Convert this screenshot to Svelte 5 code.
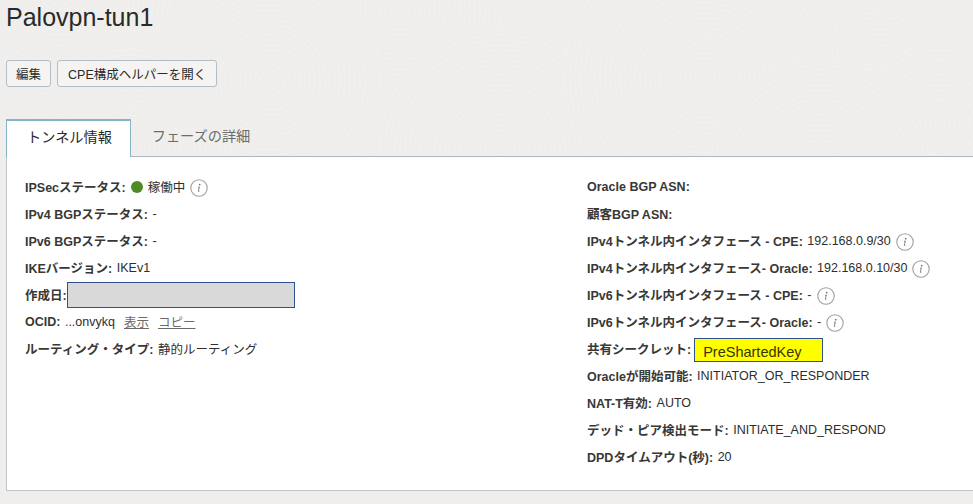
<script>
  const left = [
    { label: 'IPSecステータス:', value: '稼働中', dot: true, info: true },
    { label: 'IPv4 BGPステータス:', value: '-' },
    { label: 'IPv6 BGPステータス:', value: '-' },
    { label: 'IKEバージョン:', value: 'IKEv1' },
    { label: '作成日:', masked: true },
    { label: 'OCID:', value: '...onvykq', links: ['表示', 'コピー'] },
    { label: 'ルーティング・タイプ:', value: '静的ルーティング' }
  ];
  const right = [
    { label: 'Oracle BGP ASN:' },
    { label: '顧客BGP ASN:' },
    { label: 'IPv4トンネル内インタフェース - CPE:', value: '192.168.0.9/30', info: true },
    { label: 'IPv4トンネル内インタフェース- Oracle:', value: '192.168.0.10/30', info: true },
    { label: 'IPv6トンネル内インタフェース - CPE:', value: '-', info: true },
    { label: 'IPv6トンネル内インタフェース- Oracle:', value: '-', info: true },
    { label: '共有シークレット:', secret: 'PreShartedKey' },
    { label: 'Oracleが開始可能:', value: 'INITIATOR_OR_RESPONDER' },
    { label: 'NAT-T有効:', value: 'AUTO' },
    { label: 'デッド・ピア検出モード:', value: 'INITIATE_AND_RESPOND' },
    { label: 'DPDタイムアウト(秒):', value: '20' }
  ];
  const swirls = [
    [60, -10, 110], [400, 10, 150], [620, -30, 130], [880, -30, 120],
    [270, 80, 110], [500, 150, 120], [130, 150, 100],
    [705, 78, 140], [940, 125, 80], [820, 170, 110]
  ];
</script>

{#snippet row(r)}
  <div class="row">
    <span class="label">{r.label}</span>
    {#if r.masked}<span class="masked"></span>{/if}
    {#if r.secret}<span class="secret">{r.secret}</span>{/if}
    {#if r.dot}<span class="dot"></span>{/if}
    {#if r.value}<span class="value">{r.value}</span>{/if}
    {#if r.links}{#each r.links as l}<a class="link" href="#top">{l}</a>{/each}{/if}
    {#if r.info}
      <svg class="info" viewBox="0 0 18 18" width="18" height="18" aria-hidden="true">
        <circle cx="9" cy="9" r="8.2" fill="#fff" stroke="#9e9e9e" stroke-width="1.1" />
        <circle cx="9.7" cy="5.7" r="0.85" fill="#777" />
        <path d="M8 8.3 L9.4 8 L8.3 12.2 Q8.2 13 9.3 12.4" fill="none" stroke="#777" stroke-width="0.9" />
      </svg>
    {/if}
  </div>
{/snippet}

<div class="page">
  <svg class="texture" width="973" height="504" aria-hidden="true">
    {#each swirls as [x, y, n]}
      <circle cx={x} cy={y} r={n} fill="#efeeec" />
      {#each Array(Math.floor(n / 5)) as _, i}
        <circle cx={x} cy={y} r={(i + 1) * 5} fill="none" stroke="#f1f0ee" stroke-width="1.5" />
      {/each}
    {/each}
  </svg>
  <div class="content">
    <h1>Palovpn-tun1</h1>
    <div class="actions">
      <button>編集</button>
      <button>CPE構成ヘルパーを開く</button>
    </div>
    <div class="tabs">
      <div class="tab active">トンネル情報</div>
      <div class="tab">フェーズの詳細</div>
    </div>
    <div class="panel">
      <div class="col left">
        {#each left as r}{@render row(r)}{/each}
      </div>
      <div class="col right">
        {#each right as r}{@render row(r)}{/each}
      </div>
    </div>
  </div>
</div>

<style>
  :global(body) {
    margin: 0;
    overflow: hidden;
    background: #efeeec;
  }
  .page {
    position: relative;
    width: 973px;
    height: 504px;
    overflow: hidden;
    background: #efeeec;
    font-family: "Liberation Sans", "Noto Sans CJK JP", sans-serif;
    font-size: 12.5px;
    color: #2e2e2c;
  }
  .texture {
    position: absolute;
    inset: 0;
  }
  .content {
    position: relative;
    padding: 3px 0 0 6px;
  }
  h1 {
    margin: 0;
    height: 34px;
    font-size: 25px;
    line-height: 28px;
    font-weight: 400;
    color: #2a2a28;
  }
  .actions {
    display: flex;
    gap: 6px;
    margin-top: 23px;
  }
  button {
    height: 27px;
    padding: 0 10px;
    border: 1px solid #b4bcc4;
    border-radius: 3px;
    background: #f5f4f2;
    color: #2a2a28;
    font: inherit;
  }
  button:first-child {
    padding: 0 9px;
  }
  .tabs {
    display: flex;
    margin-top: 32px;
    height: 38px;
    box-sizing: border-box;
    border-bottom: 1px solid #aeb7bf;
  }
  .tab {
    box-sizing: border-box;
    width: 140px;
    height: 37px;
    padding-top: 3px;
    text-align: center;
    font-size: 14.2px;
    line-height: 28px;
    color: #6b6b68;
  }
  .tab.active {
    width: 125px;
    height: 38px;
    padding: 2px 0 0 2px;
    border: 1px solid #85b4c9;
    border-top-width: 2px;
    border-bottom: 0;
    background: #fff;
    color: #2a2a28;
  }
  .panel {
    display: flex;
    height: 334px;
    box-sizing: border-box;
    padding: 16px 0 0 18px;
    background: #fff;
    border-left: 1px solid #c4c4c4;
    border-bottom: 1px solid #c4c4c4;
  }
  .col.left {
    width: 562px;
  }
  .row {
    display: flex;
    align-items: center;
    height: 27px;
    white-space: pre;
  }
  .label {
    font-weight: 700;
    color: #383836;
  }
  .value {
    margin-left: 4.5px;
  }
  .dot {
    width: 12px;
    height: 12px;
    margin-left: 5px;
    border-radius: 50%;
    background: #4f8a26;
  }
  .dot + .value {
    margin-left: 5px;
  }
  .info {
    margin: 2px 0 0 5px;
    flex: none;
  }
  .link {
    margin-left: 9px;
    color: #6b6b68;
    text-decoration: underline;
  }
  .masked {
    width: 228px;
    height: 26px;
    box-sizing: border-box;
    background: #d9d9d9;
    border: 1px solid #2f528f;
  }
  .secret {
    width: 129px;
    height: 24px;
    box-sizing: border-box;
    margin: 2px 0 0 3px;
    padding: 3px 0 0 8px;
    background: #ffff00;
    border: 1px solid #2f528f;
    font-size: 14.5px;
    line-height: 20px;
    color: #3a3200;
  }
</style>
